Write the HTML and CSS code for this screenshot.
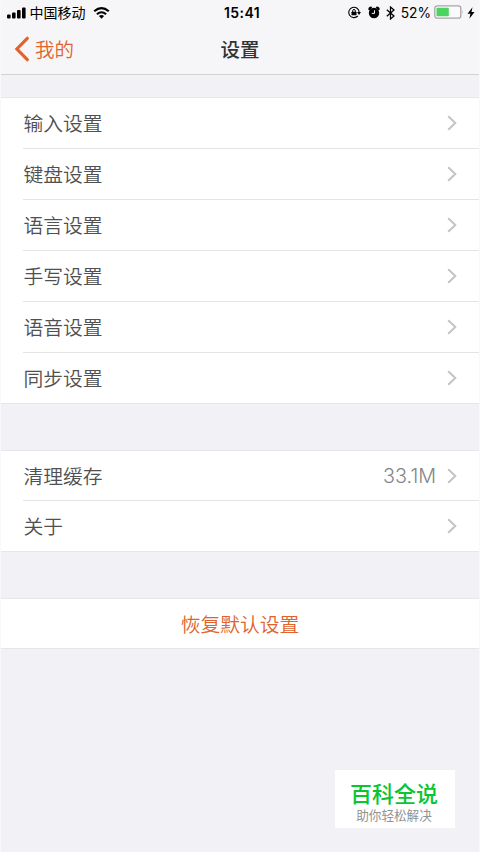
FILE: index.html
```html
<!DOCTYPE html>
<html lang="zh-CN">
<head>
<meta charset="utf-8">
<title>设置</title>
<link rel="stylesheet" href="styles.css">
</head>
<body>
<svg class="defs" width="0" height="0"><symbol id="chevron" viewBox="0 0 10 16"><path d="M1.200 1.200 8.300 8l-7.100 6.800" fill="none" stroke="#c4c4c8" stroke-width="2"/></symbol></svg>
<div class="screen">
  <header class="header">
    <div class="status">
      <div class="status-left">
        <svg width="20" height="12" viewBox="0 0 20 12"><rect x="0" y="7.500" width="3.600" height="4" rx="1"/><rect x="5" y="5.500" width="3.600" height="6" rx="1"/><rect x="10" y="3" width="3.600" height="8.500" rx="1"/><rect x="15" y="0.500" width="3.600" height="11" rx="1"/></svg>
        <span class="carrier">中国移动</span>
        <svg class="wifi" width="17" height="12" viewBox="0 0 17 12"><path d="M1.200 4.300Q8.500-2 15.800 4.300M3.900 7.200Q8.500 3.300 13.100 7.200" fill="none" stroke="#000" stroke-width="2.100"/><path d="M5.900 9Q8.500 7 11.100 9L8.500 11.700Z"/></svg>
      </div>
      <time class="clock">15:41</time>
      <div class="status-right">
        <svg width="13" height="13" viewBox="0 0 13 13"><path d="M9.800 10A5.200 5.200 0 1 1 11.200 6.200" fill="none" stroke="#000" stroke-width="1.100"/><path d="M9 6h4L11 9Z"/><rect x="3.500" y="5.800" width="5" height="3.500" rx=".5"/><path d="M4.700 6V4.800a1.300 1.300 0 0 1 2.600 0V6" fill="none" stroke="#000"/></svg>
        <svg class="alarm" width="12" height="13" viewBox="0 0 12 13"><circle cx="6" cy="7" r="5.200"/><path d="M.3 3.600Q.3.600 3.300.600L4.300 1.800 1.400 4.600ZM11.700 3.600Q11.700.600 8.700.600L7.700 1.800 10.600 4.600Z"/><path d="M6.500 4.300v3.100H3.800" fill="none" stroke="#f6f6f8" stroke-width="1"/></svg>
        <svg class="bluetooth" width="9" height="14" viewBox="0 0 9 14"><path d="M.8 3.800 8 10 4.500 13V1L8 4 .8 10.200" fill="none" stroke="#000" stroke-width="1.250"/></svg>
        <span class="percent">52%</span>
        <svg class="battery" width="30" height="14" viewBox="0 0 30 14"><rect x=".8" y=".8" width="26" height="12.400" rx="2.500" fill="#fafafa" stroke="#a6a6aa" stroke-width="1.300"/><rect x="2.500" y="2.700" width="12.300" height="8.600" rx=".8" fill="#4cd462"/><path d="M28.300 5q1.300 2 0 4Z" fill="#a6a6aa"/></svg>
        <svg class="bolt" width="8" height="12" viewBox="0 0 8 12"><path d="M5.500.300.500 6.700h2.900L2.400 11.800 7.500 5H4.500Z"/></svg>
      </div>
    </div>
    <nav class="nav">
      <a class="back"><svg width="16" height="26" viewBox="0 0 16 26"><path d="M13.300 2.300 2.900 13l10.400 10.700" fill="none" stroke="#df632d" stroke-width="3.200" stroke-linecap="round"/></svg><span>我的</span></a>
      <h1 class="title">设置</h1>
    </nav>
  </header>
  <main>
    <section class="group">
      <div class="row"><span>输入设置</span><svg class="chevron"><use href="#chevron"/></svg></div>
      <div class="row"><span>键盘设置</span><svg class="chevron"><use href="#chevron"/></svg></div>
      <div class="row"><span>语言设置</span><svg class="chevron"><use href="#chevron"/></svg></div>
      <div class="row"><span>手写设置</span><svg class="chevron"><use href="#chevron"/></svg></div>
      <div class="row"><span>语音设置</span><svg class="chevron"><use href="#chevron"/></svg></div>
      <div class="row"><span>同步设置</span><svg class="chevron"><use href="#chevron"/></svg></div>
    </section>
    <section class="group compact">
      <div class="row"><span>清理缓存</span><span class="value">33.1M</span><svg class="chevron"><use href="#chevron"/></svg></div>
      <div class="row"><span>关于</span><svg class="chevron"><use href="#chevron"/></svg></div>
    </section>
    <section class="group reset">恢复默认设置</section>
  </main>
  <aside class="badge"><strong>百科全说</strong><span>助你轻松解决</span></aside>
</div>
</body>
</html>
```
FILE: styles.css
```css
* { box-sizing: border-box; }
body { margin: 0; background: #fff; font-family: "Noto Sans CJK SC", sans-serif; color: #505050; }
svg { display: block; flex: none; }
.defs { position: absolute; }
.screen { position: relative; width: 480px; height: 852px; background: #f1f1f6; border-left: 1px solid #f8f8fb; border-right: 1px solid #f8f8fb; overflow: hidden; }
.header { height: 75px; background: #f6f6f8; border-bottom: 1px solid #d2d2d5; }
.status { height: 24px; display: grid; grid-template-columns: 1fr auto 1fr; align-items: center; color: #000; padding: 0 4px 0 6px; }
.status-left, .status-right { display: flex; align-items: center; }
.status-right { justify-content: flex-end; }
.carrier { font-size: 14px; line-height: 22px; margin: -2px 0 0 2.500px; }
.wifi { margin-left: 7px; }
.clock { font: 600 14px/24px Inter, sans-serif; letter-spacing: .4px; padding-left: 2px; }
.alarm { margin-left: 7px; }
.bluetooth { margin-left: 6px; }
.percent { font: 13.800px/24px Inter, sans-serif; margin: 1px 0 0 6px; }
.battery { margin: -1px 0 0 3px; }
.bolt { margin-left: 3px; }
.nav { height: 50px; display: grid; grid-template-columns: 1fr auto 1fr; align-items: center; padding-left: 13px; padding-right: 13px; }
.back { display: flex; align-items: center; gap: 5px; font-size: 19.500px; line-height: 30px; color: #df632d; font-weight: 350; }
.title { margin: 0; font-size: 19.500px; line-height: 30px; font-weight: 500; color: #333336; }
main { padding-top: 22px; }
.group { background: #fff; border-top: 1px solid #e6e6ea; border-bottom: 1px solid #e6e6ea; margin-bottom: 46px; padding-left: 22px; }
.row { height: 51px; display: flex; align-items: center; padding: 0 22px 0 .5px; border-bottom: 1px solid #e4e4e6; font-size: 19.800px; line-height: 30px; font-weight: 350; }
.row:last-child { height: 50px; border-bottom: 0; }
.compact .row:first-child { height: 50px; }
.chevron { width: 10px; height: 16px; margin-left: auto; }
.value { margin-left: auto; font: 300 19.800px/30px Inter, sans-serif; color: #858588; }
.value + .chevron { margin-left: 11px; }
.reset { height: 51px; margin: 0; padding: 0; display: flex; align-items: center; justify-content: center; font-size: 19.800px; line-height: 30px; color: #df632d; font-weight: 350; }
.badge { position: absolute; left: 334px; top: 770px; width: 120px; height: 58px; background: #fff; display: flex; flex-direction: column; align-items: center; padding: 8px 2px 0 0; }
.badge strong { font-size: 22px; line-height: 29px; font-weight: 500; color: #0bc530; }
.badge span { font-size: 12.600px; line-height: 15px; color: #929292; }
```
